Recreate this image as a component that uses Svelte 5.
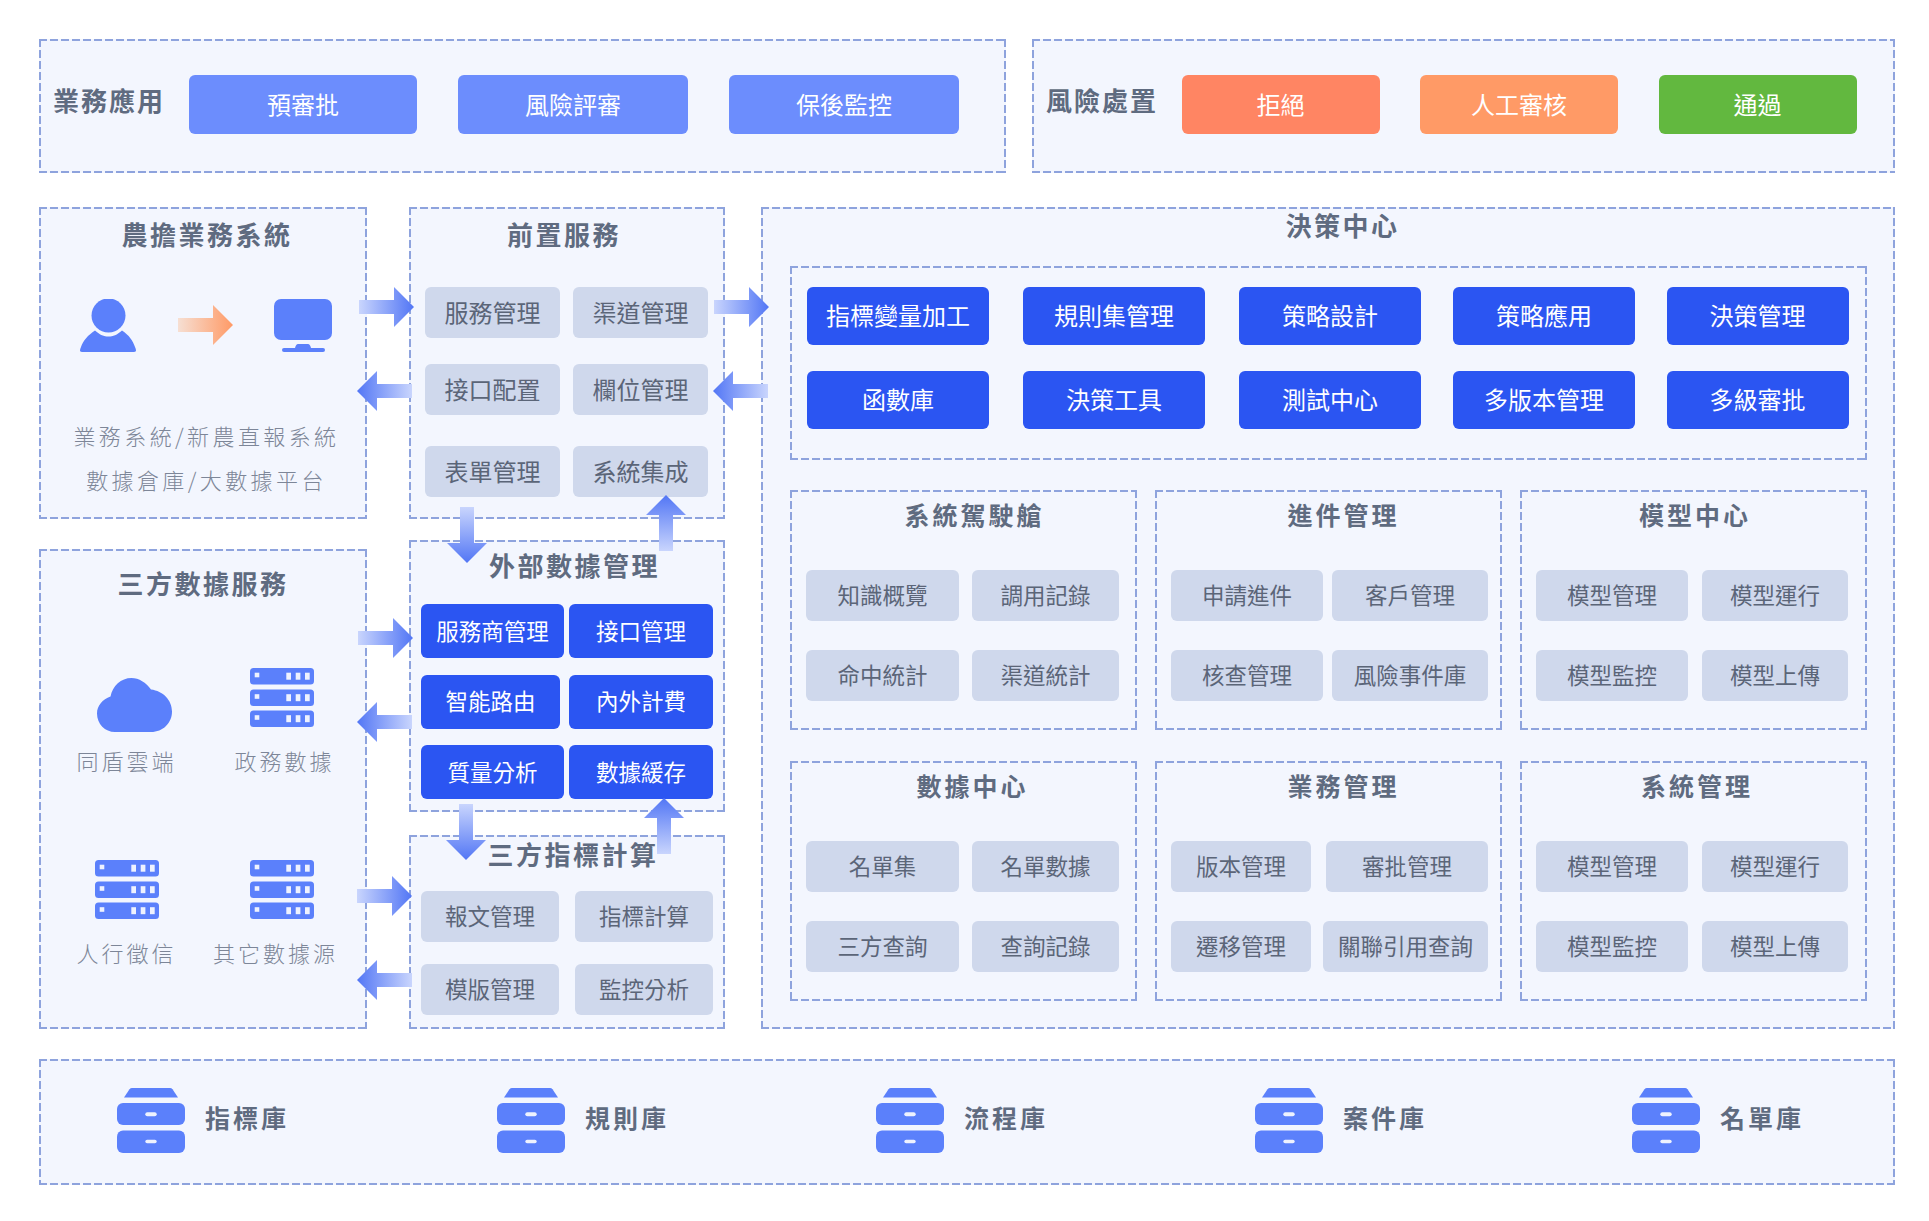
<!--
	Risk control platform architecture diagram.
	Panels are laid out by flow; the gradient arrows sit over them on the canvas.
-->

<script lang="ts">
	const decisions = [
		'指標變量加工', '規則集管理', '策略設計', '策略應用', '決策管理',
		'函數庫', '決策工具', '測試中心', '多版本管理', '多級審批'
	];

	const modelTiles = ['模型管理', '模型運行', '模型監控', '模型上傳'];

	// each sub panel: title nudge class, then rows with their column class
	const subPanels = [
		{ title: '系統駕駛艙', nudge: 'n-a', rows: [['cols-a', '知識概覽', '調用記錄'], ['cols-a', '命中統計', '渠道統計']] },
		{ title: '進件管理', nudge: 'n-b', rows: [['cols-b', '申請進件', '客戶管理'], ['cols-b', '核查管理', '風險事件庫']] },
		{ title: '模型中心', nudge: 'n-c', rows: [['cols-e', modelTiles[0], modelTiles[1]], ['cols-e', modelTiles[2], modelTiles[3]]] },
		{ title: '數據中心', nudge: 'n-a2', rows: [['cols-a', '名單集', '名單數據'], ['cols-a', '三方查詢', '查詢記錄']] },
		{ title: '業務管理', nudge: 'n-b', rows: [['cols-c', '版本管理', '審批管理'], ['cols-d', '遷移管理', '關聯引用查詢']] },
		{ title: '系統管理', nudge: 'n-c2', rows: [['cols-e', modelTiles[0], modelTiles[1]], ['cols-e', modelTiles[2], modelTiles[3]]] }
	];

	const stores = ['指標庫', '規則庫', '流程庫', '案件庫', '名單庫'];

	const arrows = [
		{ dir: 'right', x: 359, y: 287 },
		{ dir: 'right', x: 714, y: 287 },
		{ dir: 'left', x: 357, y: 371 },
		{ dir: 'left', x: 713, y: 371 },
		{ dir: 'down', x: 447, y: 507 },
		{ dir: 'up', x: 646, y: 495 },
		{ dir: 'right', x: 358, y: 618 },
		{ dir: 'left', x: 357, y: 702 },
		{ dir: 'down', x: 446, y: 804 },
		{ dir: 'up', x: 644, y: 798 },
		{ dir: 'right', x: 357, y: 876 },
		{ dir: 'left', x: 357, y: 960 }
	];
</script>

{#snippet server()}
	<svg class="icon" width="64" height="59" viewBox="0 0 64 59">
		{#each [0, 21.5, 42.5] as top}
			<rect y={top} width="64" height="16.5" rx="3.5" fill="#5b80fb" />
			<rect x="4.7" y={top + 4.7} width="4.6" height="4.6" fill="#eef2fe" />
			<rect x="36.3" y={top + 4.7} width="4.7" height="7" fill="#eef2fe" />
			<rect x="45.7" y={top + 4.7} width="4.7" height="7" fill="#eef2fe" />
			<rect x="55" y={top + 4.7} width="4.7" height="7" fill="#eef2fe" />
		{/each}
	</svg>
{/snippet}

{#snippet archive()}
	<svg class="icon" width="68" height="65" viewBox="0 0 68 65">
		<path d="M15 0H53Q54.500 0 55.500 1.200L61 9.500H7L12.500 1.200Q13.500 0 15 0Z" fill="#5b80fb" />
		<rect y="15" width="68" height="22" rx="6" fill="#5b80fb" />
		<rect y="42.500" width="68" height="22.500" rx="6" fill="#5b80fb" />
		<rect x="28.300" y="24.300" width="11.400" height="4" rx="2" fill="#eef2fe" />
		<rect x="28.300" y="51.700" width="11.400" height="3.600" rx="1.800" fill="#eef2fe" />
	</svg>
{/snippet}

<div class="page">
	<div class="top">
		<section class="panel top-panel biz">
			<h3 class="side-label">業務應用</h3>
			<div class="tile sky w228">預審批</div>
			<div class="tile sky w230">風險評審</div>
			<div class="tile sky w230">保後監控</div>
		</section>
		<section class="panel top-panel risk">
			<h3 class="side-label">風險處置</h3>
			<div class="tile red w198">拒絕</div>
			<div class="tile orange w198">人工審核</div>
			<div class="tile green w198">通過</div>
		</section>
	</div>

	<div class="main">
		<div class="col left-col">
			<section class="panel farm">
				<h3 class="title">農擔業務系統</h3>
				<div class="flow-icons">
					<svg class="icon" width="56" height="53" viewBox="0 0 56 53">
						<circle cx="28.500" cy="16.500" r="17" fill="#5b80fb" />
						<path d="M2 53C-1 53 0 50 1 48C3 42 8 36 15 31.500C20 36 24 37.500 28.500 37.500C33 37.500 37 36 42 31.500C49 36 53 42 55 48C56 50 57 53 54 53Z" fill="#5b80fb" />
					</svg>
					<div class="arrow right warm inline"></div>
					<svg class="icon" width="58" height="53" viewBox="0 0 58 53">
						<rect y="0" width="58" height="41" rx="7" fill="#5b80fb" />
						<path d="M24 45H34Q36 45 37 49H21Q22 45 24 45Z" fill="#5b80fb" />
						<rect x="8" y="49" width="43" height="4" rx="2" fill="#5b80fb" />
					</svg>
				</div>
				<p class="note">業務系統/新農直報系統</p>
				<p class="note">數據倉庫/大數據平台</p>
			</section>

			<section class="panel third">
				<h3 class="title">三方數據服務</h3>
				<div class="sources">
					<div class="source">
						<div class="source-icon cloud">
							<svg class="icon" width="75" height="54" viewBox="0 0 75 54">
								<path d="M18 54H54C66 54 75 45 75 33.500C75 22 66 13 54 11.500C49 4.500 42 0 34.500 0C24 0 15.500 8 13.500 18.500C5.500 21.500 0 27.500 0 35.500C0 46 8 54 18 54Z" fill="#5b80fb" />
							</svg>
						</div>
						<span class="source-name">同盾雲端</span>
					</div>
					<div class="source">
						<div class="source-icon">{@render server()}</div>
						<span class="source-name shift-r">政務數據</span>
					</div>
					<div class="source">
						<div class="source-icon">{@render server()}</div>
						<span class="source-name">人行徵信</span>
					</div>
					<div class="source">
						<div class="source-icon">{@render server()}</div>
						<span class="source-name shift-l">其它數據源</span>
					</div>
				</div>
			</section>
		</div>

		<div class="col mid-col">
			<section class="panel front">
				<h3 class="title">前置服務</h3>
				<div class="tiles front-tiles">
					<div class="tile gray">服務管理</div>
					<div class="tile gray">渠道管理</div>
					<div class="tile gray">接口配置</div>
					<div class="tile gray">欄位管理</div>
					<div class="tile gray low">表單管理</div>
					<div class="tile gray low">系統集成</div>
				</div>
			</section>

			<section class="panel external">
				<h3 class="title">外部數據管理</h3>
				<div class="tiles ext-tiles">
					<div class="tile blue">服務商管理</div>
					<div class="tile blue">接口管理</div>
					<div class="tile blue narrow">智能路由</div>
					<div class="tile blue">內外計費</div>
					<div class="tile blue">質量分析</div>
					<div class="tile blue">數據緩存</div>
				</div>
			</section>

			<section class="panel metric">
				<h3 class="title">三方指標計算</h3>
				<div class="tiles metric-tiles">
					<div class="tile gray">報文管理</div>
					<div class="tile gray">指標計算</div>
					<div class="tile gray">模版管理</div>
					<div class="tile gray">監控分析</div>
				</div>
			</section>
		</div>

		<section class="panel center">
			<h3 class="title center-title">決策中心</h3>
			<div class="panel decision-box">
				{#each decisions as name}
					<div class="tile blue big">{name}</div>
				{/each}
			</div>
			<div class="sub-grid">
				{#each subPanels as sub}
					<div class="panel sub">
						<h4 class="title sub-title {sub.nudge}">{sub.title}</h4>
						<div class="sub-rows">
							{#each sub.rows as row}
								<div class="sub-row {row[0]}">
									<div class="tile gray">{row[1]}</div>
									<div class="tile gray">{row[2]}</div>
								</div>
							{/each}
						</div>
					</div>
				{/each}
			</div>
		</section>
	</div>

	<section class="panel stores">
		{#each stores as name}
			<div class="store">
				{@render archive()}
				<span class="store-name">{name}</span>
			</div>
		{/each}
	</section>

	{#each arrows as a}
		<div class="arrow {a.dir} floating" style="left: {a.x}px; top: {a.y}px"></div>
	{/each}
</div>

<style>
	:global(body) {
		background: #fff;
	}

	* {
		box-sizing: border-box;
	}

	h3,
	h4,
	p {
		margin: 0;
	}

	.page {
		position: relative;
		width: 1929px;
		height: 1221px;
		padding: 39px 34px 0 39px;
		font-family: 'Noto Sans CJK TC', 'Noto Sans', sans-serif;
		color: #5f6b80;
		overflow: hidden;
	}

	/* long dashes: a plain dashed border can't get the 8/3 rhythm */
	.panel {
		border: 2px solid transparent;
		background-color: #f3f6fe;
		background-origin: border-box;
		background-image:
			linear-gradient(to right, #8ea3dd 8px, transparent 8px),
			linear-gradient(to right, #8ea3dd 8px, transparent 8px),
			linear-gradient(to bottom, #8ea3dd 8px, transparent 8px),
			linear-gradient(to bottom, #8ea3dd 8px, transparent 8px);
		background-size:
			11px 2px,
			11px 2px,
			2px 11px,
			2px 11px;
		background-position:
			0 0,
			0 100%,
			0 0,
			100% 0;
		background-repeat: repeat-x, repeat-x, repeat-y, repeat-y;
	}

	.icon {
		display: block;
		flex-shrink: 0;
	}

	.title {
		font-size: 26px;
		font-weight: 700;
		letter-spacing: 2.500px;
		text-align: center;
		color: #5f6b80;
	}

	/* ── Tiles ── */

	.tile {
		display: flex;
		align-items: center;
		justify-content: center;
		padding-bottom: 3px;
		border-radius: 6px;
		font-size: 22.500px;
		white-space: nowrap;
	}

	.gray {
		background: #cfd8ec;
		color: #5b6578;
	}

	.blue {
		background: #2b55f2;
		color: #fff;
	}

	.sky {
		background: #6c8dfd;
		color: #fff;
	}

	.red {
		background: #ff8563;
		color: #fff;
	}

	.orange {
		background: #ff9a66;
		color: #fff;
	}

	.green {
		background: #62b83f;
		color: #fff;
	}

	/* ── Top row ── */

	.top {
		display: flex;
		gap: 26px;
	}

	.top-panel {
		display: flex;
		align-items: flex-start;
		height: 134px;
		padding-top: 34px;
	}

	.biz {
		width: 967px;
		padding-left: 12px;
		gap: 41px;
	}

	.risk {
		width: 863px;
		padding-left: 12px;
		gap: 40.500px;
	}

	.side-label {
		width: 95px;
		margin-top: 8px;
		font-size: 26px;
		font-weight: 700;
		line-height: 34px;
		white-space: nowrap;
		letter-spacing: 2px;
		color: #5f6b80;
	}

	.top-panel .tile {
		height: 59px;
		font-size: 24px;
	}

	.w228 {
		width: 228px;
	}

	.w230 {
		width: 230px;
	}

	.w198 {
		width: 198px;
	}

	/* ── Main columns ── */

	.main {
		display: grid;
		grid-template-columns: 328px 316px 1134px;
		column-gap: 42px;
		height: 822px;
		margin-top: 34px;
	}

	.main > .center {
		margin-left: -6px;
	}

	.col {
		display: flex;
		flex-direction: column;
	}

	/* ── Left column ── */

	.left-col {
		gap: 30px;
	}

	.farm {
		height: 312px;
	}

	.farm .title {
		height: 56px;
		padding-top: 7px;
		line-height: 36px;
		padding-left: 8px;
	}

	.flow-icons {
		display: flex;
		align-items: flex-start;
		gap: 42px;
		margin-top: 34px;
		padding-left: 39px;
	}

	.note {
		padding-left: 7px;
		font-size: 22px;
		font-weight: 300;
		letter-spacing: 3.400px;
		text-align: center;
		line-height: 44px;
		color: #7d8698;
	}

	.flow-icons + .note {
		margin-top: 61px;
	}

	.third {
		height: 480px;
	}

	.third .title {
		height: 70px;
		line-height: 63px;
	}

	.sources {
		display: grid;
		grid-template-columns: 155px 155px;
		row-gap: 85px;
		margin-top: 47px;
		padding-left: 8px;
	}

	.source {
		display: flex;
		flex-direction: column;
		align-items: center;
	}

	.source-icon {
		height: 64px;
		margin-bottom: 13px;
	}

	.cloud {
		padding-top: 10px;
		margin-left: 15px;
	}

	.source-name {
		font-size: 22px;
		font-weight: 300;
		letter-spacing: 3px;
		line-height: 30px;
		white-space: nowrap;
		color: #7d8698;
	}

	.shift-r {
		margin-left: 6px;
	}

	.shift-l {
		margin-right: 12px;
	}

	/* ── Middle column ── */

	.tiles {
		display: grid;
	}

	.front {
		height: 312px;
		margin-bottom: 21px;
	}

	.front .title {
		height: 56px;
		padding-top: 7px;
		line-height: 36px;
		padding-right: 6px;
	}

	.front-tiles {
		grid-template-columns: 135px 135px;
		grid-auto-rows: 51px;
		gap: 26px 13px;
		margin-top: 22px;
		padding-left: 14px;
	}

	.low {
		transform: translateY(5px);
	}

	.front-tiles .tile {
		font-size: 24px;
	}

	.external {
		height: 272px;
		margin-bottom: 23px;
	}

	.external .title {
		height: 48px;
		line-height: 46px;
		padding-left: 15px;
	}

	.ext-tiles {
		grid-template-columns: 143px 144px;
		grid-auto-rows: 54px;
		gap: 16.500px 5px;
		margin-top: 14px;
		padding-left: 10px;
	}

	.narrow {
		width: 139px;
	}

	.metric {
		height: 194px;
	}

	.metric .title {
		height: 38px;
		line-height: 34px;
		padding-left: 12px;
	}

	.metric-tiles {
		grid-template-columns: 138px 138px;
		grid-auto-rows: 51px;
		gap: 22px 16px;
		margin-top: 16px;
		padding-left: 10px;
	}

	/* ── Decision centre ── */

	.center {
		width: 1134px;
		padding: 0 26px 0 27px;
	}

	.center-title {
		height: 38px;
		line-height: 34px;
		margin-top: -1px;
		margin-bottom: 20px;
		padding-left: 28px;
	}

	.decision-box {
		display: grid;
		grid-template-columns: 216px 216px 214px 213.500px 182px;
		grid-auto-rows: 58px;
		row-gap: 26px;
		height: 194px;
		padding: 19px 0 0 15px;
	}

	.big {
		width: 182px;
		font-size: 24px;
	}

	.sub-grid {
		display: grid;
		grid-template-columns: repeat(3, 347px);
		grid-auto-rows: 240px;
		gap: 31px 18px;
		margin-top: 30px;
	}

	.sub {
		padding: 0 0 0 14px;
	}

	.sub-title {
		height: 48px;
		margin-left: -14px;
		font-size: 25px;
		letter-spacing: 3px;
		line-height: 44px;
	}

	.n-a {
		padding-left: 22px;
	}

	.n-a2 {
		padding-left: 18px;
	}

	.n-b {
		padding-left: 30px;
	}

	.n-c {
		padding-left: 3px;
	}

	.n-c2 {
		padding-left: 7px;
	}

	.sub-rows {
		display: flex;
		flex-direction: column;
		gap: 29px;
		margin-top: 30px;
	}

	.sub-row {
		display: grid;
		grid-auto-rows: 51px;
	}

	.cols-a {
		grid-template-columns: 153px 147px;
		column-gap: 13px;
	}

	.cols-b {
		grid-template-columns: 152px 156px;
		column-gap: 9px;
	}

	.cols-c {
		grid-template-columns: 140px 162px;
		column-gap: 15px;
	}

	.cols-d {
		grid-template-columns: 140px 165px;
		column-gap: 12px;
	}

	.cols-e {
		grid-template-columns: 152px 146px;
		column-gap: 14px;
	}

	/* ── Bottom stores ── */

	.stores {
		display: grid;
		grid-template-columns: 380px 379px 379px 377px auto;
		align-items: center;
		height: 126px;
		margin-top: 30px;
		padding: 0 0 4px 76px;
	}

	.store {
		display: flex;
		align-items: center;
		gap: 20px;
	}

	.store-name {
		margin-bottom: 7px;
		font-size: 25px;
		font-weight: 700;
		letter-spacing: 3px;
		color: #5f6b80;
	}

	/* ── Arrows ── */

	.arrow {
		flex-shrink: 0;
	}

	.floating {
		position: absolute;
	}

	.right,
	.left {
		width: 55px;
		height: 40px;
	}

	.up,
	.down {
		width: 40px;
		height: 56px;
	}

	.right {
		background: linear-gradient(to right, #c9d5fd, #5276f5);
		clip-path: polygon(0 13px, 35px 13px, 35px 0, 55px 20px, 35px 40px, 35px 27px, 0 27px);
	}

	.left {
		background: linear-gradient(to left, #c9d5fd, #5276f5);
		clip-path: polygon(55px 13px, 20px 13px, 20px 0, 0 20px, 20px 40px, 20px 27px, 55px 27px);
	}

	.down {
		background: linear-gradient(to bottom, #c9d5fd, #5276f5);
		clip-path: polygon(13px 0, 27px 0, 27px 36px, 40px 36px, 20px 56px, 0 36px, 13px 36px);
	}

	.up {
		background: linear-gradient(to top, #c9d5fd, #5276f5);
		clip-path: polygon(13px 56px, 27px 56px, 27px 20px, 40px 20px, 20px 0, 0 20px, 13px 20px);
	}

	.warm {
		background: linear-gradient(to right, #f6dfd3, #ff9a66);
		margin-right: -1px;
	}

	.inline {
		margin-top: 6px;
	}
</style>
